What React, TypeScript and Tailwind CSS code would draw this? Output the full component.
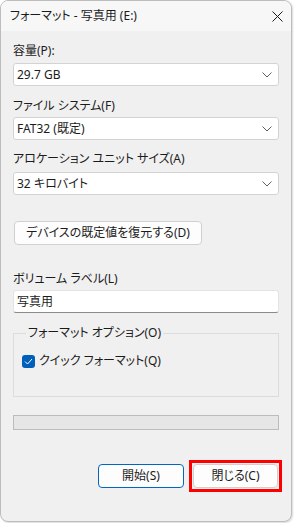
const font = "font-['Noto_Sans','Noto_Sans_CJK_JP',sans-serif] [font-feature-settings:'palt']";

function Chevron() {
  return (
    <svg width="10" height="6" viewBox="0 0 10 6" className="shrink-0">
      <path d="M0.5 0.5 L5 5 L9.5 0.5" fill="none" stroke="#5f5f5f" strokeWidth="1" />
    </svg>
  );
}

function Select({ value }: { value: string }) {
  return (
    <div className="flex h-[23px] items-center justify-between rounded-[3px] border border-[#d3d3d3] bg-white pl-[3px] pr-[6px]">
      <span className="text-[12px] leading-4 text-[#1b1b1b]">{value}</span>
      <Chevron />
    </div>
  );
}

function Label({ text }: { text: string }) {
  return <div className="h-4 text-[12px] leading-4 text-[#1b1b1b]">{text}</div>;
}

export default function App() {
  return (
    <div className={`h-[523px] w-[294px] bg-white ${font}`}>
      <div className="flex h-[522px] w-[292px] flex-col overflow-hidden rounded-lg border border-[#bdbdbd] bg-[#f0f0f0] shadow-[1px_1px_2px_rgba(0,0,0,0.15)]">
        {/* title bar */}
        <div className="flex h-[30px] shrink-0 items-center justify-between bg-[#f7f7f7] pl-[9px] pr-[7px]">
          <span className="text-[12px] leading-4 text-[#1b1b1b]">フォーマット - 写真用 (E:)</span>
          <svg width="11" height="11" viewBox="0 0 11 11" className="mr-[1px]">
            <path d="M0.5 0.5 L10.5 10.5 M10.5 0.5 L0.5 10.5" stroke="#1b1b1b" strokeWidth="1" />
          </svg>
        </div>

        <div className="flex flex-col px-3">
          <div className="mt-[12px]"><Label text="容量(P):" /></div>
          <div className="mt-[4px]"><Select value="29.7 GB" /></div>

          <div className="mt-[12px]"><Label text="ファイル システム(F)" /></div>
          <div className="mt-[3px]"><Select value="FAT32 (既定)" /></div>

          <div className="mt-[11px]"><Label text="アロケーション ユニット サイズ(A)" /></div>
          <div className="mt-[5px]"><Select value="32 キロバイト" /></div>

          <button className="ml-px mt-[26px] flex h-6 w-[188px] items-center justify-center rounded-[4px] border border-[#d0d0d0] bg-[#fdfdfd] text-[12px] leading-4 text-[#1b1b1b]">
            デバイスの既定値を復元する(D)
          </button>

          <div className="mt-[26px]"><Label text="ボリューム ラベル(L)" /></div>
          <div className="mt-[3px] flex h-[23px] items-center rounded-[3px] border border-[#e3e3e3] border-b-[#8a8a8a] bg-white pl-[3px]">
            <span className="text-[12px] leading-4 text-[#1b1b1b]">写真用</span>
          </div>

          <fieldset className="mt-[12px] h-[72px] border border-[#dcdcdc] px-2 pt-[12px]">
            <legend className="ml-[4px] px-[2px] text-[12px] leading-4 text-[#1b1b1b]">フォーマット オプション(O)</legend>
            <div className="flex items-center gap-[4px]">
              <span className="flex h-[13px] w-[13px] items-center justify-center rounded-[3px] bg-[#005fb8]">
                <svg width="9" height="7" viewBox="0 0 9 7">
                  <path d="M1 3.5 L3.5 6 L8 1" fill="none" stroke="white" strokeWidth="1" />
                </svg>
              </span>
              <span className="text-[12px] leading-4 text-[#1b1b1b]">クイック フォーマット(Q)</span>
            </div>
          </fieldset>

          <div className="mt-[18px] h-[15px] border border-[#bcbcbc] bg-[#e6e6e6]" />

          <div className="mt-[30px] flex items-center justify-end gap-[5px]">
            <button className="h-6 w-[86px] rounded-[4px] border border-[#0067c0] bg-[#fdfdfd] text-[12px] leading-4 text-[#1b1b1b]">
              開始(S)
            </button>
            <div className="-mr-[3px] border-[3px] border-[#ff0000] p-px">
              <button className="block h-6 w-[85px] rounded-[4px] border border-[#d0d0d0] bg-[#fdfdfd] text-[12px] leading-4 text-[#1b1b1b]">
                閉じる(C)
              </button>
            </div>
          </div>
        </div>
      </div>
    </div>
  );
}
